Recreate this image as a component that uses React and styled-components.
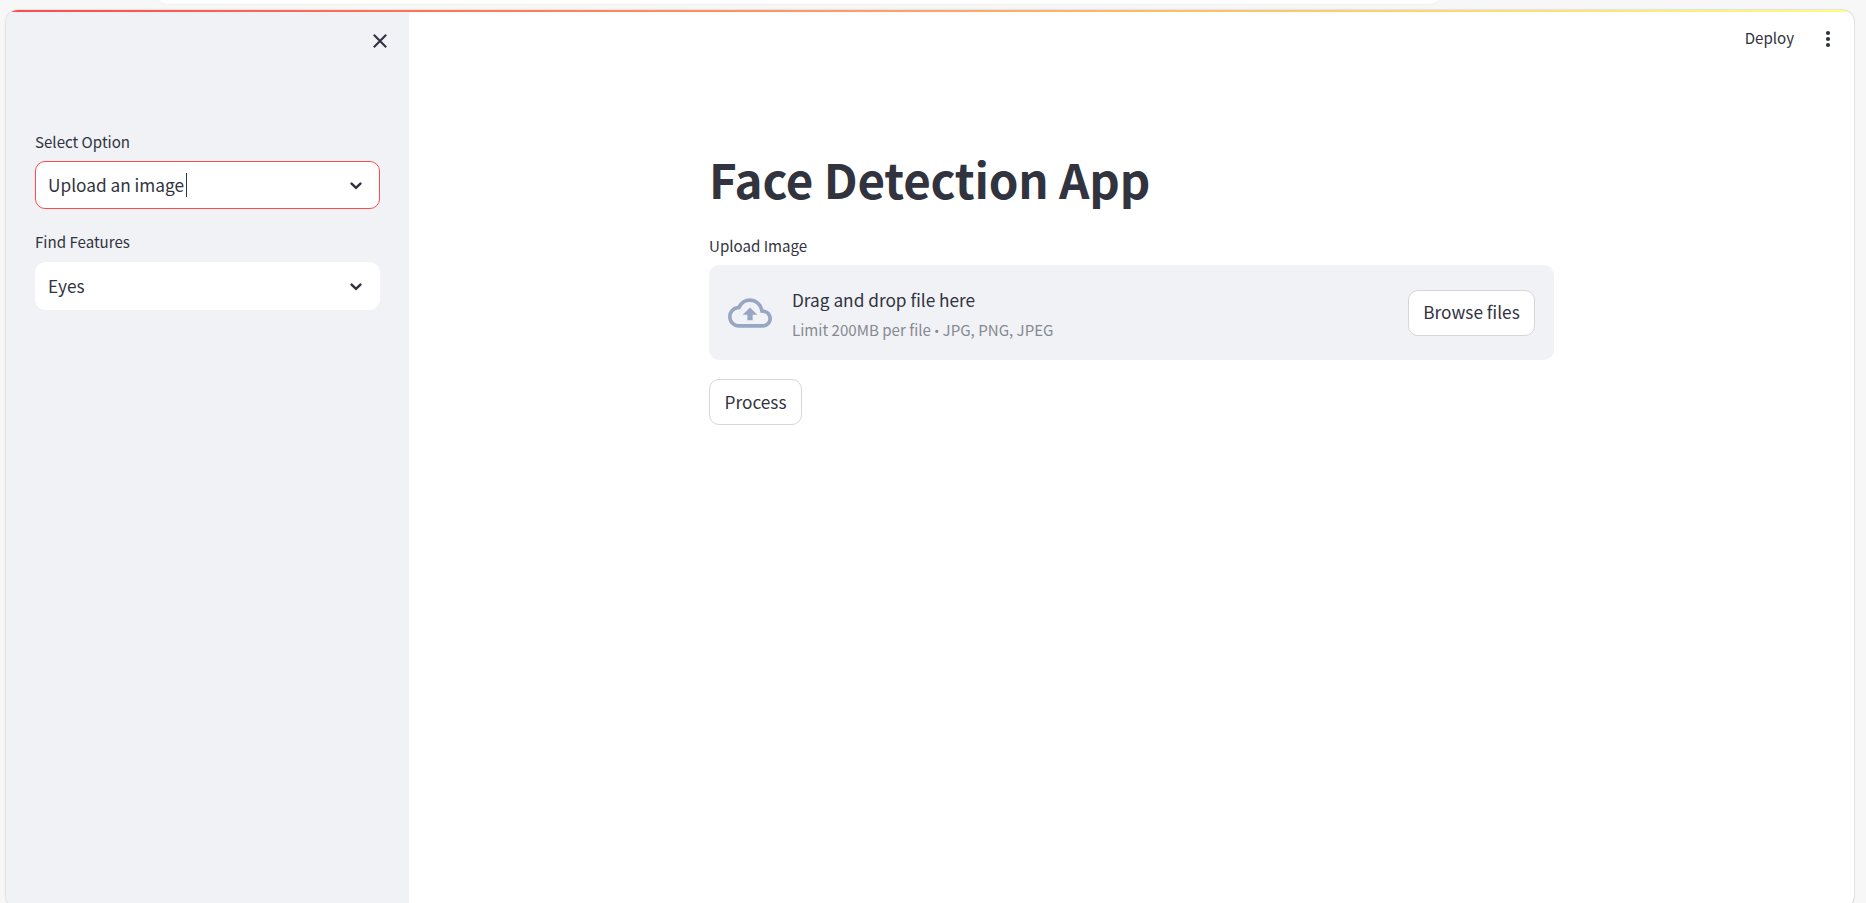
import React from "react";
import styled, { createGlobalStyle } from "styled-components";

const GlobalStyle = createGlobalStyle`
  * { box-sizing: border-box; }
  body {
    margin: 0;
    background: #f7f7f7;
    color: #31333f;
    font-family: "Noto Sans CJK SC", "Noto Sans", sans-serif;
    font-size: 17.25px;
    overflow: hidden;
  }
`;

const Page = styled.div`
  height: 903px;
  overflow: hidden;
  display: flex;
  flex-direction: column;
`;

const BrowserBar = styled.div`
  flex: none;
  height: 10px;
  padding-left: 150px;
  overflow: hidden;
`;

const AddressPill = styled.div`
  width: 1297px;
  height: 40px;
  margin-top: -36px;
  border-radius: 20px;
  background: #fff;
  box-shadow: 0 0 3px rgba(0, 0, 0, 0.06);
`;

const Window = styled.div`
  flex: none;
  height: 898px;
  margin: 0 12px 0 6px;
  display: flex;
  flex-direction: column;
  border-radius: 12px;
  overflow: hidden;
  background: #fff;
  box-shadow: 0 0 2px rgba(0, 0, 0, 0.28);
`;

const Decoration = styled.div`
  flex: none;
  height: 2px;
  background: linear-gradient(90deg, #ff4b4b, #fffd80);
`;

const Columns = styled.div`
  flex: 1;
  display: flex;
`;

const Sidebar = styled.aside`
  width: 403px;
  padding: 22px 29px 0;
  background: #f0f2f6;
`;

const CloseRow = styled.div`
  display: flex;
  justify-content: flex-end;
  height: 95px;
  margin-right: -7px;

  svg { display: block; }
`;

const Field = styled.div`
  margin-bottom: 20px;

  & + & > :first-child { height: 33px; }
`;

const Label = styled.div`
  font-size: 15.1px;
  line-height: 24px;
  height: 32px;
  white-space: nowrap;
`;

const SelectBox = styled.div`
  display: flex;
  align-items: center;
  height: 48px;
  padding: 0 17.5px 0 12px;
  border: 1px solid ${(p) => (p.$focused ? "#ff4b4b" : "#fff")};
  border-radius: 10px;
  background: #fff;
`;

const Value = styled.span`
  line-height: 24px;
  white-space: nowrap;
`;

const Caret = styled.span`
  width: 1px;
  height: 24px;
  margin-left: 2px;
  background: #31333f;
`;

const Chevron = styled.svg`
  margin-left: auto;
  margin-top: 2px;
  width: 12px;
  height: 8px;
`;

const Main = styled.main`
  flex: 1;
  display: flex;
  flex-direction: column;
`;

const Toolbar = styled.header`
  display: flex;
  justify-content: flex-end;
  align-items: center;
  height: 50px;
  padding-right: 23px;
  font-size: 15.1px;
  line-height: 24px;
`;

const Kebab = styled.svg`
  width: 6px;
  height: 18px;
  margin-left: 31px;
  margin-top: 4px;
`;

const Content = styled.section`
  width: 845px;
  margin-left: 300px;
  padding-top: 85px;
`;

const Title = styled.h1`
  margin: 0;
  height: 86px;
  font-size: 47.5px;
  font-weight: 700;
  line-height: 63px;
  letter-spacing: -0.22px;
  white-space: nowrap;
`;

const Dropzone = styled.div`
  display: flex;
  align-items: center;
  height: 95px;
  padding: 0 19px;
  margin-bottom: 19px;
  border-radius: 10px;
  background: #f0f2f6;
`;

const CloudIcon = styled.svg`
  width: 44px;
  height: 44px;
  margin-right: 20px;
`;

const Instructions = styled.div`
  flex: 1;
  padding-top: 2px;
  white-space: nowrap;
`;

const Prompt = styled.div`
  line-height: 31px;
`;

const Limit = styled.div`
  font-size: 15.1px;
  line-height: 29px;
  color: #868991;
`;

const Bullet = styled.span`
  font-family: "Noto Sans", sans-serif;
  font-size: 13px;
  line-height: 1;
`;

const Button = styled.button`
  display: flex;
  align-items: center;
  justify-content: center;
  width: ${(p) => p.$width}px;
  height: 46px;
  padding: 0 0 1px;
  border: 1px solid #d6d6d9;
  border-radius: 10px;
  background: #fff;
  color: inherit;
  font: inherit;
  line-height: 24px;
  white-space: nowrap;
`;

function Select({ label, value, focused }) {
  return (
    <Field>
      <Label>{label}</Label>
      <SelectBox $focused={focused}>
        <Value>{value}</Value>
        {focused && <Caret />}
        <Chevron viewBox="0 0 12 8">
          <path d="M1.6 1.6 6 5.8l4.4-4.2" fill="none" stroke="#31333f" strokeWidth="2.5" strokeLinecap="round" />
        </Chevron>
      </SelectBox>
    </Field>
  );
}

export default function App() {
  return (
    <Page>
      <GlobalStyle />
      <BrowserBar>
        <AddressPill />
      </BrowserBar>
      <Window>
        <Decoration />
        <Columns>
          <Sidebar>
            <CloseRow>
              <svg width="14" height="14" viewBox="0 0 14 14">
                <path d="M.8.8l12.4 12.4M13.2.8.8 13.2" stroke="#31333f" strokeWidth="2.1" />
              </svg>
            </CloseRow>
            <Select label="Select Option" value="Upload an image" focused />
            <Select label="Find Features" value="Eyes" />
          </Sidebar>
          <Main>
            <Toolbar>
              Deploy
              <Kebab viewBox="0 0 6 18">
                <g fill="#31333f">
                  <circle cx="3" cy="3" r="2.1" />
                  <circle cx="3" cy="9" r="2.1" />
                  <circle cx="3" cy="15" r="2.1" />
                </g>
              </Kebab>
            </Toolbar>
            <Content>
              <Title>Face Detection App</Title>
              <Label>Upload Image</Label>
              <Dropzone>
                <CloudIcon viewBox="0 0 24 24">
                  <path
                    fill="#97a6c3"
                    d="M19.35 10.04A7.49 7.49 0 0012 4C9.11 4 6.6 5.64 5.35 8.04A5.994 5.994 0 000 14c0 3.31 2.69 6 6 6h13c2.76 0 5-2.24 5-5 0-2.64-2.05-4.78-4.65-4.96zM19 18H6c-2.21 0-4-1.79-4-4 0-2.05 1.53-3.76 3.56-3.97l1.07-.11.5-.95A5.469 5.469 0 0112 6c2.62 0 4.88 1.86 5.39 4.43l.3 1.5 1.53.11A2.98 2.98 0 0122 15c0 1.65-1.35 3-3 3zM8 13h2.55v3h2.9v-3H16l-4-4z"
                  />
                </CloudIcon>
                <Instructions>
                  <Prompt>Drag and drop file here</Prompt>
                  <Limit>
                    Limit 200MB per file <Bullet>•</Bullet> JPG, PNG, JPEG
                  </Limit>
                </Instructions>
                <Button $width={127}>Browse files</Button>
              </Dropzone>
              <Button $width={93}>Process</Button>
            </Content>
          </Main>
        </Columns>
      </Window>
    </Page>
  );
}
